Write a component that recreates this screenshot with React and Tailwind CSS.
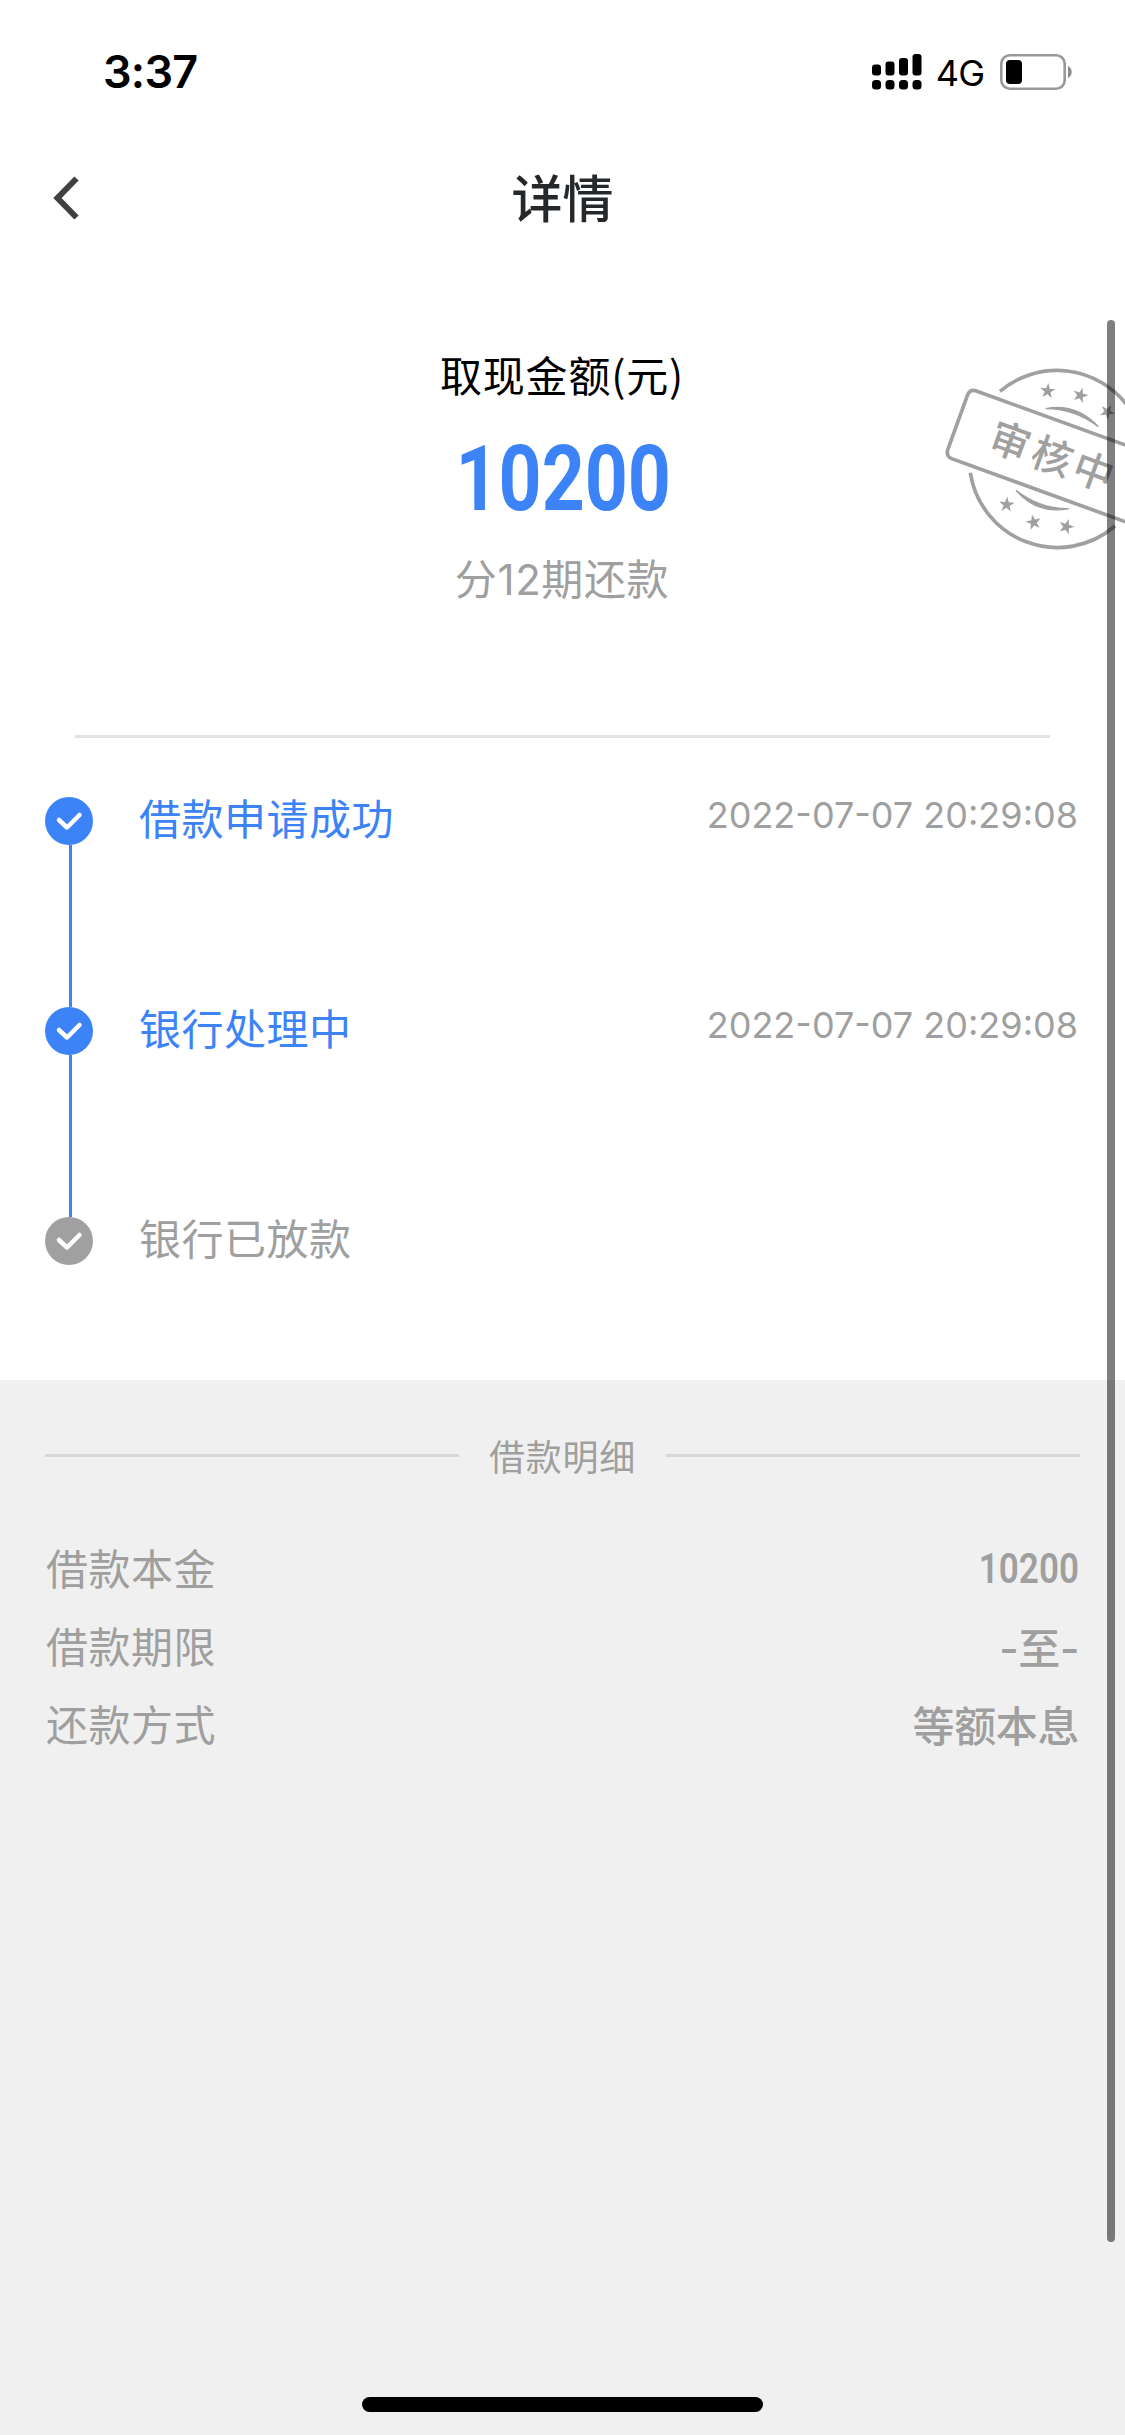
import React from 'react';

const steps = [
    { title: '借款申请成功', time: '2022-07-07 20:29:08', done: true },
    { title: '银行处理中', time: '2022-07-07 20:29:08', done: true },
    { title: '银行已放款', time: '', done: false },
];

const details = [
    { label: '借款本金', value: '10200', numeric: true },
    { label: '借款期限', value: '-至-' },
    { label: '还款方式', value: '等额本息' },
];

const StatusBar = () => (
    <div className="h-[143px] shrink-0 flex items-center justify-between pl-[103px] pr-[52px] text-black">
        <span className="text-[45px] leading-none tracking-[-0.8px] font-semibold font-['Inter',sans-serif]">3:37</span>
        <div className="flex items-center">
            <svg className="w-[50px] h-9" viewBox="0 0 50 36" fill="currentColor">
                <rect x="0" y="10.5" width="9" height="11" rx="3" />
                <rect x="13.5" y="7.5" width="9" height="14" rx="3" />
                <rect x="27" y="4" width="9" height="17.5" rx="3" />
                <rect x="40.5" y="0" width="9" height="21.5" rx="3" />
                <rect x="0" y="26" width="9" height="9.5" rx="3.5" />
                <rect x="13.5" y="26" width="9" height="9.5" rx="3.5" />
                <rect x="27" y="26" width="9" height="9.5" rx="3.5" />
                <rect x="40.5" y="26" width="9" height="9.5" rx="3.5" />
            </svg>
            <span className="w-[78px] pr-0.5 text-center pt-0.5 text-[36px] leading-none tracking-tight font-['Inter',sans-serif]">4G</span>
            <svg className="w-[73px] h-9" viewBox="0 0 73 36">
                <rect x="1.3" y="1.3" width="63.4" height="33.4" rx="8.5" fill="none" stroke="#999" strokeWidth="2.6" />
                <rect x="6" y="6" width="16" height="24" rx="4" fill="#000" />
                <path d="M68 12c5 2 5 10 0 12z" fill="#8c8c8c" />
            </svg>
        </div>
    </div>
);

const NavBar = () => (
    <div className="h-[110px] shrink-0 grid grid-cols-3 items-center px-[52px]">
        <svg className="w-7 h-11" viewBox="0 0 28 44" fill="none" stroke="#404040" strokeWidth="6">
            <path d="M24.500 2.500L5.500 22l19 19.500" />
        </svg>
        <h1 className="pb-1 text-center text-[51px] leading-none font-medium text-[#25282b]">详情</h1>
    </div>
);

const Star = ({ x, y, r }) => (
    <polygon
        transform={`translate(${x} ${y}) rotate(${r})`}
        points="0,-24 5.500,-7.500 23,-7.500 9,3 14,19.500 0,9.500 -14,19.500 -9,3 -23,-7.500 -5.500,-7.500"
        fill="#a0a0a0"
    />
);

const Stamp = () => (
    <svg className="absolute top-[310px] right-0 w-[220px] h-[260px]" viewBox="0 0 660 780" fill="none" stroke="#a0a0a0" strokeWidth="11">
        <path d="M285 244A264 264 0 0 1 668 288" />
        <path d="M196 488A264 264 0 0 0 630 648" />
        <path d="M680 412L214 243Q196 237 188 254L128 420Q123 438 140 446L680 642" />
        <path d="M422 296Q512 278 580 350Q508 296 422 296Z" strokeWidth="4" fill="#a0a0a0" />
        <path d="M333 541Q395 614 492 596Q406 598 333 541Z" strokeWidth="4" fill="#a0a0a0" />
        <g stroke="none">
            <Star x={428} y={243} r={5} />
            <Star x={526} y={256} r={18} />
            <Star x={607} y={306} r={30} />
            <Star x={305} y={584} r={5} />
            <Star x={386} y={637} r={-12} />
            <Star x={484} y={650} r={18} />
            <text
                transform="translate(315 394) rotate(20)"
                x="-60 74 206"
                y="44"
                fontSize="121"
                fontWeight="500"
                fill="#a0a0a0"
            >
                审核中
            </text>
        </g>
    </svg>
);

const StepIcon = ({ done }) => (
    <svg className="w-12 h-12 shrink-0" viewBox="0 0 48 48">
        <circle cx="24" cy="24" r="24" fill={done ? '#3c83f8' : '#a0a0a0'} />
        <path d="M14 23l8 7.500L34.500 18" fill="none" stroke="#fff" strokeWidth="4.500" strokeLinecap="round" strokeLinejoin="round" />
    </svg>
);

const App = () => {
    return (
        <div className="relative w-full h-[2435px] flex flex-col overflow-hidden bg-white font-['Noto_Sans_CJK_SC',sans-serif]">
            <StatusBar />
            <NavBar />

            {/* Amount */}
            <div className="pt-[91px] pr-px flex flex-col items-center">
                <p className="text-[42px] leading-[60px] tracking-[0.8px] text-black">取现金额(元)</p>
                <p className="mt-[35px] pl-1 text-[91px] leading-[80px] font-bold text-[#3c83f8] font-['Roboto',sans-serif] scale-x-[0.825]">10200</p>
                <p className="mt-[31px] text-[42px] leading-[60px] tracking-[0.6px] text-[#9f9f9f] font-['Inter','Noto_Sans_CJK_SC',sans-serif]">分12期还款</p>
            </div>
            <div className="mt-[125px] mx-[75px] h-[3px] shrink-0 bg-[#e2e2e2]"></div>

            {/* Progress */}
            <div className="pt-[59px] pl-[45px] pr-[47px] h-[642px] shrink-0">
                {steps.map((step, i) => (
                    <div key={step.title} className="flex h-[210px]">
                        <div className="w-12 flex flex-col">
                            <StepIcon done={step.done} />
                            {i < steps.length - 1 && <div className="ml-6 w-[3px] flex-1 bg-[#3c83f8]"></div>}
                        </div>
                        <span className={`ml-[46px] text-[42px] leading-[40px] tracking-[0.5px] ${step.done ? 'text-[#3c83f8]' : 'text-[#9f9f9f]'}`}>
                            {step.title}
                        </span>
                        <span className="ml-auto text-[36px] leading-9 text-[#9f9f9f] font-['Inter',sans-serif]">{step.time}</span>
                    </div>
                ))}
            </div>

            {/* Loan details */}
            <div className="flex-1 flex flex-col bg-[#f0f0f0] px-[45px] pt-[50px]">
                <div className="flex items-center text-[#9f9f9f]">
                    <div className="h-[3px] flex-1 bg-[#d8d8d8]"></div>
                    <span className="w-[207px] text-center text-[36px] leading-[50px] tracking-[0.7px]">借款明细</span>
                    <div className="h-[3px] flex-1 bg-[#d8d8d8]"></div>
                </div>
                <div className="mt-12 pl-px pr-px text-[42px] leading-[78px] text-[#9f9f9f]">
                    {details.map((item) => (
                        <div key={item.label} className="flex justify-between h-[78px]">
                            <span className="tracking-[0.5px]">{item.label}</span>
                            {item.numeric ? (
                                <span className="pt-0.5 font-semibold font-['Roboto',sans-serif] origin-right scale-x-[0.835]">{item.value}</span>
                            ) : (
                                <span className="pt-1 tracking-[-0.4px] font-medium font-['Inter','Noto_Sans_CJK_SC',sans-serif]">{item.value}</span>
                            )}
                        </div>
                    ))}
                </div>
                <div className="mt-auto mb-[23px] mx-auto w-[401px] h-[15px] rounded-full bg-black"></div>
            </div>

            <Stamp />
            <div className="absolute top-[320px] right-[10px] w-2 h-[1922px] rounded-full bg-black/50"></div>
        </div>
    );
};

export default App;
